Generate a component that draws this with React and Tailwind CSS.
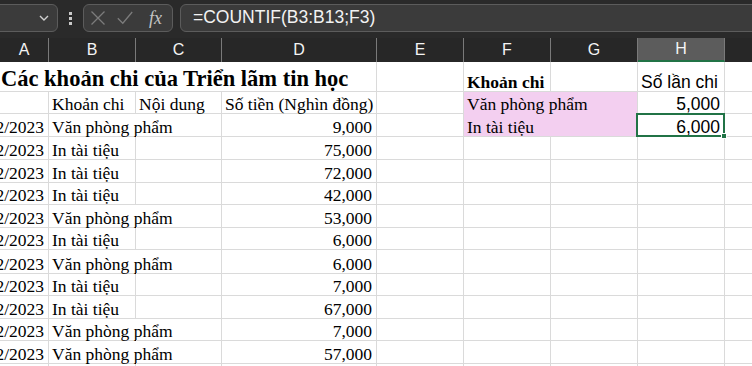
import React from 'react'

const COLS = ['A', 'B', 'C', 'D', 'E', 'F', 'G', 'H', 'I']
const WIDTHS = ['w-[49px]', 'w-[87px]', 'w-[86px]', 'w-[155px]', 'w-[87px]', 'w-[87px]', 'w-[87px]', 'w-[87px]', 'w-[87px]']

const VPP = 'Văn phòng phẩm'
const IN = 'In tài tiệu'

const DATA = [
  [VPP, '9,000'],
  [IN, '75,000'],
  [IN, '72,000'],
  [IN, '42,000'],
  [VPP, '53,000'],
  [IN, '6,000'],
  [VPP, '6,000'],
  [IN, '7,000'],
  [IN, '67,000'],
  [VPP, '7,000'],
  [VPP, '57,000'],
]

// row heights from row 3 to row 13
const HEIGHTS = ['h-[23px]', 'h-[23px]', 'h-[23px]', 'h-[22px]', 'h-[23px]', 'h-[22px]', 'h-[24px]', 'h-[22px]', 'h-[23px]', 'h-[22px]', 'h-[23px]']

const serif = 'font-["Liberation_Serif",serif] text-[17.5px]'
const sans = 'font-["Liberation_Sans",Arial,sans-serif] text-[17.5px]'

function Cell({ col, children, className = '', right, noR, noB }) {
  return (
    <div
      className={`${WIDTHS[col]} shrink-0 flex items-end leading-[18px] whitespace-nowrap text-black ${
        noR ? '' : 'border-r'
      } ${noB ? '' : 'border-b'} border-[#dadada] ${right ? 'justify-end pr-[4px]' : 'pl-[3px]'} ${className}`}
    >
      {children}
    </div>
  )
}

function Toolbar() {
  return (
    <div className="h-[38px] bg-[#2a2a2a] flex items-start pt-[4px] gap-0">
      {/* name box */}
      <div className="ml-[-12px] w-[70px] h-[28px] rounded-md bg-[#3b3b3b] border border-[#5c5c5c] flex items-center justify-end pr-[7px]">
        <svg width="12" height="8" viewBox="0 0 12 8" fill="none" stroke="#d0d0d0" strokeWidth="1.4">
          <path d="M2 2l4 4 4-4" />
        </svg>
      </div>
      {/* more dots */}
      <div className="w-[25px] h-[28px] flex flex-col items-center justify-center gap-[2px]">
        <span className="w-[3px] h-[3px] bg-[#c8c8c8]" />
        <span className="w-[3px] h-[3px] bg-[#c8c8c8]" />
        <span className="w-[3px] h-[3px] bg-[#c8c8c8]" />
      </div>
      {/* cancel / enter / fx */}
      <div className="w-[90px] h-[28px] rounded-md bg-[#3b3b3b] border border-[#5c5c5c] flex items-center pl-[6px] gap-[11px]">
        <svg width="16" height="16" viewBox="0 0 16 16" fill="none" stroke="#7c7c7c" strokeWidth="1.3">
          <path d="M1.5 1.5l13 13M14.5 1.5l-13 13" />
        </svg>
        <svg width="16" height="14" viewBox="0 0 16 14" fill="none" stroke="#7c7c7c" strokeWidth="1.3">
          <path d="M0.8 7.2l5 5L15.2 1" />
        </svg>
        <span className="ml-[5px] font-['Liberation_Serif',serif] italic text-[18px] leading-none text-[#c4c4c4]">fx</span>
      </div>
      {/* formula box */}
      <div className="ml-[7px] flex-1 mr-[-20px] h-[28px] rounded-md bg-[#3b3b3b] border border-[#5c5c5c] flex items-center pl-[12px]">
        <span className={`${sans} text-[#f2f2f2] leading-none`}>=COUNTIF(B3:B13;F3)</span>
      </div>
    </div>
  )
}

function HeaderRow() {
  return (
    <div className="h-[24px] bg-[#272727] flex">
      {COLS.map((c, i) => (
        <div
          key={c}
          className={`${WIDTHS[i]} shrink-0 flex items-center justify-center border-r border-[#7a7a7a] font-["Liberation_Sans",Arial,sans-serif] text-[16px] text-[#f4f4f4] ${
            c === 'H' ? 'bg-[#5c5c5c] border-b-2 border-b-[#217346]' : ''
          }`}
        >
          {c}
        </div>
      ))}
    </div>
  )
}

export default function App() {
  return (
    <div className="w-[752px] h-[366px] overflow-hidden bg-white">
      <Toolbar />
      <HeaderRow />

      {/* row 1 */}
      <div className="h-[30px] flex">
        <Cell col={0} noR className="pl-0">
          <span className="ml-[-2px] font-['Liberation_Serif',serif] font-bold text-[22.5px] leading-[24px]">
            Các khoản chi của Triển lãm tin học
          </span>
        </Cell>
        <Cell col={1} noR />
        <Cell col={2} noR />
        <Cell col={3} />
        <Cell col={4} />
        <Cell col={5} className={`${serif} font-bold`}>Khoản chi</Cell>
        <Cell col={6} />
        <Cell col={7} className={sans}>Số lần chi</Cell>
        <Cell col={8} />
      </div>

      {/* row 2 */}
      <div className="h-[22px] flex">
        <Cell col={0} />
        <Cell col={1} className={serif}>Khoản chi</Cell>
        <Cell col={2} className={serif}>Nội dung</Cell>
        <Cell col={3} className={serif}>Số tiền (Nghìn đồng)</Cell>
        <Cell col={4} />
        <Cell col={5} noR className={`${serif} bg-[#f3cff0] border-b-[#f3cff0]`}>
          <span className="relative z-10">{VPP}</span>
        </Cell>
        <Cell col={6} className="bg-[#f3cff0] border-b-[#f3cff0]" />
        <Cell col={7} right className={sans}>5,000</Cell>
        <Cell col={8} />
      </div>

      {/* rows 3 - 13 */}
      {DATA.map(([item, amount], i) => (
        <div key={i} className={`${HEIGHTS[i]} flex`}>
          <Cell col={0} right className={`${serif} overflow-hidden`}>12/12/2023</Cell>
          <Cell col={1} noR={item === VPP} className={serif}>{item}</Cell>
          <Cell col={2} />
          <Cell col={3} right className={serif}>{amount}</Cell>
          <Cell col={4} />
          {i === 0 ? (
            <>
              <Cell col={5} noR className={`${serif} bg-[#f3cff0]`}>{IN}</Cell>
              <Cell col={6} className="bg-[#f3cff0]" />
              <Cell col={7} right className={`${sans} relative`}>
                6,000
                <span className="absolute left-[-2px] right-[-1px] top-[-1px] bottom-[-1px] border-2 border-[#217346]" />
                <span className="absolute right-[-3px] bottom-[-3px] w-[6px] h-[6px] bg-[#217346] border border-white" />
              </Cell>
            </>
          ) : (
            <>
              <Cell col={5} />
              <Cell col={6} />
              <Cell col={7} />
            </>
          )}
          <Cell col={8} />
        </div>
      ))}

      {/* row 14 */}
      <div className="h-[24px] flex">
        {COLS.map((c, i) => (
          <Cell key={c} col={i} />
        ))}
      </div>
    </div>
  )
}
